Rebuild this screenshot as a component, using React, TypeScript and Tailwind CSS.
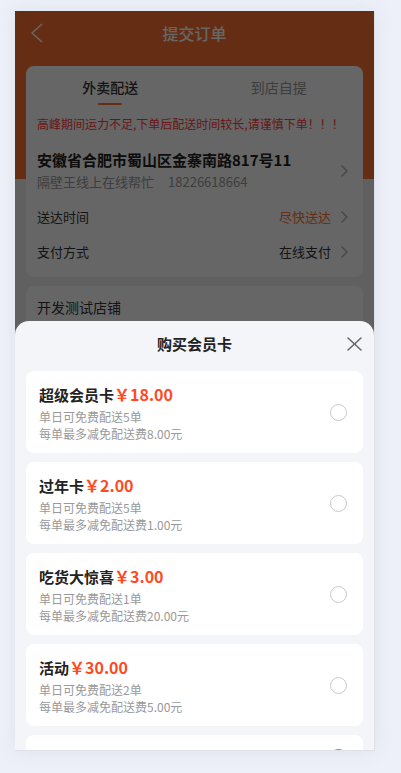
import React from 'react';

const cards = [
  { name: '超级会员卡', price: '18.00', times: 5, cut: '8.00' },
  { name: '过年卡', price: '2.00', times: 5, cut: '1.00' },
  { name: '吃货大惊喜', price: '3.00', times: 1, cut: '20.00' },
  { name: '活动', price: '30.00', times: 2, cut: '5.00' },
];

function Chevron({ className = '' }: { className?: string }) {
  return (
    <svg width="7" height="12" viewBox="0 0 7 12" fill="none" className={className}>
      <polyline points="1,1 6,6 1,11" stroke="#b5b5b5" strokeWidth="1.5" strokeLinecap="round" strokeLinejoin="round" />
    </svg>
  );
}

export default function App() {
  return (
    <div className="min-h-screen bg-[#edf0f8] pt-[11px] pl-[15px] font-['Noto_Sans_CJK_SC','Noto_Sans',sans-serif]">
      <div className="relative w-[360px] h-[740px] overflow-hidden border-r border-b border-[#dde0e7] shadow-[0_0_18px_rgba(120,130,160,0.12)] bg-[#f1f1f1]">
        {/* page under the sheet */}
        <div className="h-full bg-[linear-gradient(to_bottom,#fc7332_0,#fc7332_168px,#f1f1f1_168px)]">
          <div className="grid grid-cols-[60px_1fr_60px] items-center h-[44px]">
            <div className="pl-[15px] flex items-center">
              <svg width="13" height="20" viewBox="0 0 13 20" fill="none">
                <polyline points="12,1 2,10 12,19" stroke="#fff" strokeWidth="1.6" strokeLinejoin="round" />
              </svg>
            </div>
            <div className="text-center text-white text-[16px] font-medium leading-[22px]">提交订单</div>
            <div />
          </div>

          <div className="mx-[11px] mt-[11px] bg-white rounded-[8px] pb-[8px]">
            <div className="flex h-[44px]">
              <div className="flex-1 flex flex-col items-center pt-[11px]">
                <span className="text-[14px] leading-[20px] font-medium text-[#333]">外卖配送</span>
                <span className="mt-[6px] w-[24px] h-[2px] bg-[#fc7332] rounded-full" />
              </div>
              <div className="flex-1 flex flex-col items-center pt-[11px]">
                <span className="text-[14px] leading-[20px] text-[#999]">到店自提</span>
              </div>
            </div>
            <p className="mt-[5px] px-[11px] text-[12px] leading-[18px] text-[#ff3c3c] whitespace-nowrap">
              高峰期间运力不足,下单后配送时间较长,请谨慎下单！！！
            </p>
            <div className="mt-[16px] pl-[11px] pr-[15px] flex items-center">
              <div className="flex-1">
                <div className="text-[15px] leading-[22px] font-bold text-[#222]">安徽省合肥市蜀山区金寨南路817号11</div>
                <div className="mt-[1px] text-[13px] leading-[20px] text-[#999] flex gap-[14px]">
                  <span>隔壁王线上在线帮忙</span>
                  <span>18226618664</span>
                </div>
              </div>
              <Chevron />
            </div>
            <div className="mt-[7px] h-[35px] pl-[11px] pr-[15px] flex items-center text-[13px]">
              <span className="flex-1 text-[#333]">送达时间</span>
              <span className="text-[#fc7332] mr-[10px]">尽快送达</span>
              <Chevron />
            </div>
            <div className="h-[35px] pl-[11px] pr-[15px] flex items-center text-[13px]">
              <span className="flex-1 text-[#333]">支付方式</span>
              <span className="text-[#333] mr-[10px]">在线支付</span>
              <Chevron />
            </div>
          </div>

          <div className="mx-[11px] mt-[9px] bg-white rounded-[8px] h-[120px] pt-[11px] px-[11px]">
            <div className="text-[14px] leading-[20px] text-[#333]">开发测试店铺</div>
          </div>
        </div>

        <div className="absolute inset-0 bg-black/60" />

        {/* member card sheet */}
        <div className="absolute left-0 right-0 bottom-0 top-[310px] rounded-t-[14px] bg-[#f4f5f9] overflow-hidden">
          <div className="relative h-[50px] pt-[12px]">
            <div className="text-center text-[15px] leading-[22px] font-bold text-[#222]">购买会员卡</div>
            <button className="absolute top-[16px] right-[12px] bg-transparent border-none p-0">
              <svg width="15" height="14" viewBox="0 0 15 14" fill="none" stroke="#666" strokeWidth="1.5" strokeLinecap="round">
                <line x1="1" y1="1" x2="14" y2="13" />
                <line x1="14" y1="1" x2="1" y2="13" />
              </svg>
            </button>
          </div>
          <div className="flex flex-col gap-[9px]">
            {cards.map((c) => (
              <div key={c.name} className="mx-[11px] h-[82px] rounded-[8px] bg-white flex items-center pl-[13px] pr-[16px]">
                <div className="flex-1">
                  <div className="flex items-baseline leading-[22px]">
                    <span className="text-[15px] font-bold text-[#222]">{c.name}</span>
                    <span className="text-[16px] font-bold text-[#ff4a1f]">￥{c.price}</span>
                  </div>
                  <div className="mt-[2px] text-[12px] leading-[17px] text-[#999]">单日可免费配送{c.times}单</div>
                  <div className="text-[12px] leading-[17px] text-[#999]">每单最多减免配送费{c.cut}元</div>
                </div>
                <span className="w-[17px] h-[17px] rounded-full border border-[#c9c9c9]" />
              </div>
            ))}
            <div className="mx-[11px] h-[44px] rounded-[8px] bg-white flex items-center justify-end pr-[16px]">
              <span className="w-[17px] h-[17px] rounded-full bg-[#ff6a2b]" />
            </div>
          </div>
        </div>
      </div>
    </div>
  );
}
